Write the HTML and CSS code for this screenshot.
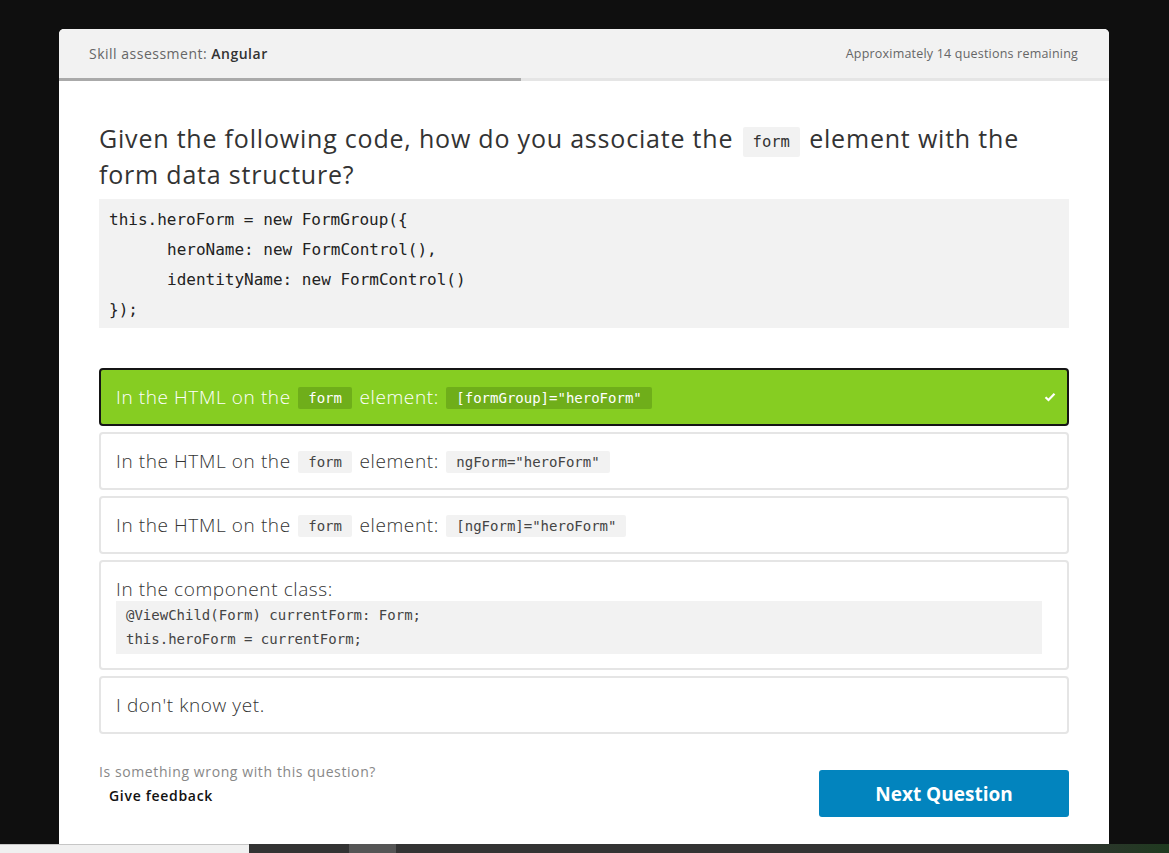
FILE: index.html
```html
<!DOCTYPE html>
<html>
<head>
<meta charset="utf-8">
<link rel="stylesheet" href="styles.css">
</head>
<body>
<div class="page">
  <div class="card">
    <div class="header">
      <div class="title">Skill assessment: <strong>Angular</strong></div>
      <div class="remaining">Approximately 14 questions remaining</div>
    </div>
    <div class="progress"><div class="progress-fill" style="width: 462px"></div></div>
    <div class="content">
      <h1 class="question"><span>Given the following code, how do you associate the</span> <code class="qcode">form</code> <span>element with the</span><br><span>form data structure?</span></h1>
      <pre class="codeblock"><span class="line">this.heroForm = new FormGroup({</span><span class="line indent">heroName: new FormControl(),</span><span class="line indent">identityName: new FormControl()</span><span class="line">});</span></pre>
      <div class="options">
        <div class="option selected">
          <span>In the HTML on the <code class="chip">form</code> element: <code class="chip">[formGroup]="heroForm"</code></span>
          <svg class="check" width="12" height="10" viewBox="0 0 12 10"><path d="M1.5 5.2 L4.5 8 L10.5 1.8" fill="none" stroke="#fff" stroke-width="2.2"/></svg>
        </div>
        <div class="option">
          <span>In the HTML on the <code class="chip">form</code> element: <code class="chip">ngForm="heroForm"</code></span>
        </div>
        <div class="option">
          <span>In the HTML on the <code class="chip">form</code> element: <code class="chip">[ngForm]="heroForm"</code></span>
        </div>
        <div class="option tall">
          <div>In the component class:</div>
          <pre class="optcode"><span class="line">@ViewChild(Form) currentForm: Form;</span><span class="line">this.heroForm = currentForm;</span></pre>
        </div>
        <div class="option">
          <span>I don't know yet.</span>
        </div>
      </div>
      <div class="footer">
        <div class="feedback">
          <div class="wrong">Is something wrong with this question?</div>
          <a class="give">Give feedback</a>
        </div>
        <button class="next">Next Question</button>
      </div>
    </div>
  </div>
  <div class="taskbar">
    <div class="tb-left"></div>
    <div class="tb-right">
      <div class="tb-gap1"></div>
      <div class="tb-active"></div>
      <div class="tb-rest"></div>
    </div>
  </div>
</div>
</body>
</html>
```
FILE: styles.css
```css
* { box-sizing: border-box; }
html, body { margin: 0; padding: 0; }
body {
  background: #0f0f0f;
  width: 1169px;
  height: 853px;
  overflow: hidden;
  font-family: "Open Sans", "Noto Sans", sans-serif;
  color: #333;
}
.page {
  padding-top: 29px;
  display: flex;
  flex-direction: column;
}
.card {
  margin-left: 59px;
  width: 1050px;
  height: 815px;
  background: #fff;
  border-radius: 5px 5px 0 0;
  overflow: hidden;
}
.header {
  height: 49px;
  background: #f2f2f2;
  display: flex;
  align-items: center;
  justify-content: space-between;
  padding: 0 31px 0 30px;
  font-size: 14px;
  color: #666;
  letter-spacing: 0.5px;
}
.title strong { color: #333; font-weight: 600; }
.remaining { font-size: 12.5px; letter-spacing: 0.2px; }
.progress {
  height: 3px;
  background: #e5e5e5;
}
.progress-fill { height: 3px; background: #aaa; }
.content {
  padding: 40px 40px 0;
}
.question {
  margin: 0;
  font-weight: 400;
  font-size: 25px;
  line-height: 35px;
  letter-spacing: 0.8px;
  color: #333;
}
.qcode {
  display: inline-block;
  font-family: "DejaVu Sans Mono", monospace;
  font-size: 15.5px;
  line-height: 22px;
  letter-spacing: 0;
  background: #f2f2f2;
  padding: 4px 10px;
  margin: 0 2px;
  border-radius: 2px;
  vertical-align: 1px;
}
.codeblock {
  margin: 7px 0 0;
  background: #f2f2f2;
  padding: 6px 10px 3px;
  font-family: "DejaVu Sans Mono", monospace;
  font-size: 16px;
  line-height: 30px;
  color: #222;
}
.line { display: block; }
.indent { padding-left: 58px; }
.options {
  margin-top: 40px;
  display: flex;
  flex-direction: column;
  gap: 6px;
}
.option {
  position: relative;
  border: 2px solid #e5e5e5;
  border-radius: 4px;
  padding: 13px 15px;
  font-size: 19px;
  line-height: 28px;
  font-weight: 300;
  letter-spacing: 0.6px;
  font-family: "Open Sans", sans-serif;
  color: #333;
  display: flex;
  align-items: center;
  justify-content: space-between;
}
.option.tall { display: block; padding-top: 13px; padding-bottom: 14px; }
.option.selected {
  background: #86cd22;
  border-color: #151515;
  color: #fff;
}
.chip {
  display: inline-block;
  font-family: "DejaVu Sans Mono", monospace;
  font-size: 14px;
  line-height: 22px;
  letter-spacing: 0;
  background: #f2f2f2;
  padding: 0 10px;
  margin: 0 2px;
  border-radius: 2px;
  color: #444;
  vertical-align: 1px;
}
.selected .chip { background: #6fae1a; color: #fff; }
.check { margin-right: -4px; }
.optcode {
  margin: -2px 10px 0 0;
  background: #f2f2f2;
  padding: 2px 10px 3px;
  font-family: "DejaVu Sans Mono", monospace;
  font-size: 14px;
  line-height: 24px;
  letter-spacing: 0;
  color: #444;
}
.footer {
  margin-top: 28px;
  display: flex;
  justify-content: space-between;
  align-items: flex-start;
}
.wrong { font-size: 14px; color: #888; line-height: 20px; letter-spacing: 0.6px; }
.give {
  display: block;
  margin: 4px 0 0 10px;
  font-size: 14px;
  font-weight: 600;
  color: #111;
  line-height: 20px;
  letter-spacing: 0.7px;
}
.next {
  margin-top: 8px;
  width: 250px;
  height: 47px;
  border: none;
  border-radius: 3px;
  background: #0284be;
  color: #fff;
  font-family: "Open Sans", sans-serif;
  font-weight: 700;
  font-size: 19px;
}
.taskbar {
  height: 9px;
  display: flex;
}
.tb-left {
  width: 249px;
  background: #f0f0f0;
  border-top: 1px solid #c6c6c6;
}
.tb-right {
  flex: 1;
  display: flex;
  background: #333;
}
.tb-gap1 { width: 100px; }
.tb-active { width: 47px; background: #555; }
.tb-rest { flex: 1; background: linear-gradient(90deg, #333 85%, #1f3a1f 100%); }
```
